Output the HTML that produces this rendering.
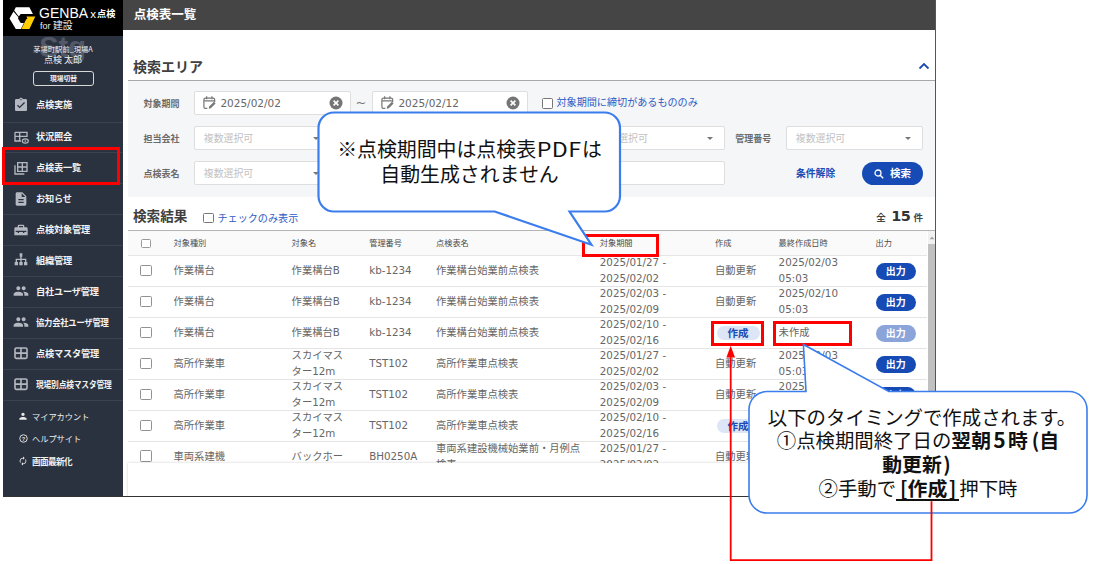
<!DOCTYPE html>
<html lang="ja">
<head>
<meta charset="utf-8">
<title>点検表一覧</title>
<style>
html,body{margin:0;padding:0;}
body{width:1093px;height:564px;position:relative;overflow:hidden;background:#fff;
  font-family:"DejaVu Sans","Noto Sans CJK JP",sans-serif;color:#555;}
.abs{position:absolute;}
#shot{position:absolute;left:0;top:0;width:936px;height:497px;overflow:hidden;background:#fff;}
#frameR{position:absolute;left:935px;top:0;width:1px;height:497px;background:#555;}
#frameB{position:absolute;left:3px;top:496px;width:933px;height:1px;background:#333;}
/* sidebar */
#side{position:absolute;left:3px;top:0;width:120px;height:496px;background:#2b323f;overflow:hidden;}
#logo{position:absolute;left:0;top:0;width:120px;height:36px;background:#000;}
.mi{position:absolute;left:0;width:120px;height:30.94px;border-top:1px solid #3a4250;box-sizing:border-box;}
.mi span{position:absolute;left:33px;top:-1.3px;line-height:30px;font-size:9.2px;font-weight:700;color:#f2f2f2;
  font-family:"Noto Sans CJK JP",sans-serif;white-space:nowrap;letter-spacing:-0.2px;}
.mi svg{position:absolute;left:10.2px;top:6.2px;width:16px;height:16px;}
.sm{position:absolute;left:0;width:120px;height:14px;}
.sm span{position:absolute;left:29px;top:0;line-height:14px;font-size:8.2px;color:#f0f0f0;font-family:"Noto Sans CJK JP",sans-serif;white-space:nowrap;}
.sm svg{position:absolute;left:15.5px;top:3px;width:8px;height:8px;}
/* top bar */
#top{position:absolute;left:123px;top:0;width:813px;height:29.5px;background:#454545;}
#top span{position:absolute;left:10.8px;top:0;line-height:28.6px;font-size:12.5px;font-weight:700;color:#fff;font-family:"Noto Sans CJK JP",sans-serif;}
/* search */
.h2{position:absolute;font-family:"Noto Sans CJK JP",sans-serif;font-weight:700;color:#404040;white-space:nowrap;}
#sarea{position:absolute;left:128px;top:80px;width:808px;height:117px;background:#f5f6f8;border-top:1px solid #a8a8a8;box-sizing:border-box;}
.lbl{position:absolute;font-size:9px;font-weight:700;color:#6a6a6a;font-family:"Noto Sans CJK JP",sans-serif;line-height:23px;white-space:nowrap;}
.inp{position:absolute;height:24px;box-sizing:border-box;border:1px solid #dedede;border-radius:2px;background:#fff;margin-top:-0.3px;}
.inp .ph{position:absolute;left:8.8px;top:0;line-height:22.6px;font-size:9.9px;color:#c2c2c2;font-family:"Noto Sans CJK JP",sans-serif;white-space:nowrap;}
.inp .dt{position:absolute;left:25.4px;top:0;line-height:22.2px;font-size:10.5px;color:#666;white-space:nowrap;}
.inp .arr{position:absolute;right:11px;top:10px;width:0;height:0;border-left:3px solid transparent;border-right:3px solid transparent;border-top:3.5px solid #777;}
.blue{color:#2c5cc5;}
/* table */
#tbl{position:absolute;left:128px;top:230px;width:799px;height:233px;border-top:1px solid transparent;box-sizing:border-box;overflow:hidden;}
#thead{position:absolute;left:0;top:0;width:799px;height:25px;background:#fafafa;border-bottom:1px solid #e6e6e6;box-sizing:border-box;}
.th{position:absolute;top:-1.3px;line-height:24px;font-size:8.2px;color:#4a4a4a;font-family:"Noto Sans CJK JP",sans-serif;white-space:nowrap;}
.tr{position:absolute;left:0;width:799px;height:30.95px;border-bottom:1px solid #e4e4e4;box-sizing:border-box;}
.td{position:absolute;font-size:10.3px;color:#666;white-space:nowrap;line-height:14.5px;}
.td.one{top:7px;}
.td.two{top:-0.6px;line-height:15.4px;}
.cb{position:absolute;left:12.4px;top:8.8px;width:11.6px;height:11.6px;box-sizing:border-box;border:1.6px solid #919191;border-radius:1.5px;background:#fff;}
.out{position:absolute;left:747.5px;top:7.2px;width:40.5px;height:16.6px;border-radius:9px;background:#164ab4;color:#fff;font-size:10px;font-weight:700;text-align:center;line-height:16px;font-family:"Noto Sans CJK JP",sans-serif;}
.out.dis{background:#8ba4da;}
.mk{position:absolute;left:588.5px;top:8.6px;width:43px;height:14px;border-radius:7px;background:#dde6f7;color:#1b4bb3;font-size:10.5px;font-weight:700;text-align:center;line-height:13.5px;font-family:"Noto Sans CJK JP",sans-serif;}
/* annotations */
.red{position:absolute;border:3px solid #ff0000;box-sizing:border-box;}
.co b{font-size:19.85px;font-weight:700;}
.w5{display:inline-block;width:17px;text-align:center;font-size:21px;line-height:1;}
.pl{display:inline-block;width:11.5px;text-align:right;}
.pr{display:inline-block;width:10.5px;text-align:left;margin-left:1.5px;}
.ul{position:relative;display:inline-block;line-height:1;}
.ul::after{content:"";position:absolute;left:0;right:0;bottom:-2.6px;height:1.4px;background:#111;}
.co{font-family:"Noto Sans CJK JP",sans-serif;color:#111;text-align:center;white-space:nowrap;position:absolute;}
</style>
</head>
<body>
<div id="shot">
  <!-- top bar -->
  <div id="top"><span>点検表一覧</span></div>

  <!-- sidebar -->
  <div id="side">
    <div id="logo">
      <svg class="abs" style="left:5px;top:5px" width="30" height="27" viewBox="8 5 30 27">
        <polygon points="15.800,7.300 29.400,7.300 32.900,13.900 20.600,13.900 18.800,16.400 14.200,10.600" fill="#fff"/>
        <polygon points="13.500,11.600 9.500,18.400 15.800,29.100 20.900,29.100 23.900,22.900 20.700,22.900 18,18.400 18.400,17.200" fill="#fff"/>
        <polygon points="26.500,16.600 35.300,16.600 29.400,29.100 21.400,29.100 26.200,19.300 27.400,18.700" fill="#fc0"/>
      </svg>
      <div class="abs" style="left:36px;top:3.600px;font-family:'Liberation Sans',sans-serif;font-size:15.200px;line-height:17px;color:#fff;white-space:nowrap;transform:scaleX(0.925);transform-origin:0 50%;">GENBA</div>
      <div class="abs" style="left:87.300px;top:6px;font-family:'Liberation Sans',sans-serif;font-size:11.500px;line-height:16px;color:#fff;">x</div>
      <div class="abs" style="left:94px;top:4.600px;font-family:'Noto Sans CJK JP',sans-serif;font-weight:700;font-size:9.200px;line-height:16px;color:#fff;white-space:nowrap;">点検</div>
      <div class="abs" style="left:37px;top:20px;font-family:'Liberation Sans',sans-serif;font-size:9px;line-height:11px;color:#eee;white-space:nowrap;">for <span style="font-size:9.800px;font-family:'Noto Sans CJK JP',sans-serif;">建設</span></div>
    </div>
    <div class="abs" style="left:36.200px;top:29.500px;font-family:'Liberation Sans',sans-serif;font-weight:700;font-size:29px;line-height:34px;color:#525868;">Stg</div>
    <div class="abs" style="left:0;top:44px;width:120px;text-align:center;font-size:7.3px;line-height:10px;color:#f0f0f0;font-family:'Noto Sans CJK JP',sans-serif;white-space:nowrap;">茅場町駅前_現場A</div>
    <div class="abs" style="left:0;top:54px;width:120px;text-align:center;font-size:9px;line-height:12px;color:#f0f0f0;font-family:'Noto Sans CJK JP',sans-serif;white-space:nowrap;">点検 太郎</div>
    <div class="abs" style="left:30px;top:71px;width:61px;height:15px;box-sizing:border-box;border:1px solid #d8d8d8;border-radius:3px;text-align:center;font-size:6.8px;font-weight:700;line-height:13px;color:#f0f0f0;font-family:'Noto Sans CJK JP',sans-serif;">現場切替</div>

    <div class="mi" style="top:90.60px;border-top:none">
      <svg viewBox="0 0 24 24"><path fill="#b4b8c0" d="M19 3h-4.18C14.4 1.84 13.3 1 12 1s-2.400.84-2.820 2H5c-1.100 0-2 .9-2 2v14c0 1.100.9 2 2 2h14c1.100 0 2-.9 2-2V5c0-1.100-.9-2-2-2zm-7 0c.55 0 1 .45 1 1s-.45 1-1 1-1-.45-1-1 .45-1 1-1zm-2 14l-4-4 1.410-1.410L10 14.170l6.590-6.590L18 9l-8 8z"/></svg>
      <span>点検実施</span></div>
    <div class="mi" style="top:121.54px">
      <svg viewBox="0 0 24 24"><path fill="none" stroke="#b4b8c0" stroke-width="2" d="M3 5h18v7M3 5v13h9M3 11h18M10 5v13"/><ellipse cx="18.500" cy="18" rx="4.500" ry="3.200" fill="none" stroke="#b4b8c0" stroke-width="1.800"/><circle cx="18.500" cy="18" r="1.300" fill="#b4b8c0"/></svg>
      <span>状況照会</span></div>
    <div class="mi" style="top:152.48px">
      <svg viewBox="0 0 24 24"><path fill="none" stroke="#b4b8c0" stroke-width="2" d="M7 4h14v13H7zM7 10.500h14M14 4v13M3 8v13h14"/></svg>
      <span>点検表一覧</span></div>
    <div class="mi" style="top:183.42px">
      <svg viewBox="0 0 24 24"><path fill="#b4b8c0" d="M14 2H6c-1.100 0-2 .9-2 2v16c0 1.100.9 2 2 2h12c1.100 0 2-.9 2-2V8l-6-6zm2 16H8v-2h8v2zm0-4H8v-2h8v2zm-3-5V3.500L18.500 9H13z"/></svg>
      <span>お知らせ</span></div>
    <div class="mi" style="top:214.36px">
      <svg viewBox="0 0 24 24"><path fill="#b4b8c0" d="M20 8h-3V6c0-1.100-.9-2-2-2H9c-1.100 0-2 .9-2 2v2H4c-1.100 0-2 .9-2 2v10h20V10c0-1.100-.9-2-2-2zM9 6h6v2H9V6zm11 9h-3v1.500h-2V15H9v1.500H7V15H4v-2h16v2z"/></svg>
      <span>点検対象管理</span></div>
    <div class="mi" style="top:245.30px">
      <svg viewBox="0 0 24 24"><path fill="#b4b8c0" d="M10 2h4v5h-1v3h7v5h1.500v5h-5v-5H18v-3h-5v3h1.500v5h-5v-5H11v-3H6v3h1.500v5h-5v-5H4v-5h7V7h-1z"/></svg>
      <span>組織管理</span></div>
    <div class="mi" style="top:276.24px">
      <svg viewBox="0 0 24 24"><path fill="#b4b8c0" d="M16 11c1.660 0 2.990-1.340 2.990-3S17.660 5 16 5c-1.660 0-3 1.340-3 3s1.340 3 3 3zm-8 0c1.660 0 2.990-1.340 2.990-3S9.660 5 8 5C6.340 5 5 6.340 5 8s1.340 3 3 3zm0 2c-2.330 0-7 1.170-7 3.500V19h14v-2.500c0-2.330-4.670-3.500-7-3.500zm8 0c-.29 0-.62.020-.970.050 1.160.84 1.970 1.970 1.970 3.450V19h6v-2.500c0-2.330-4.670-3.500-7-3.500z"/></svg>
      <span>自社ユーザ管理</span></div>
    <div class="mi" style="top:307.18px">
      <svg viewBox="0 0 24 24"><path fill="#b4b8c0" d="M16 11c1.660 0 2.990-1.340 2.990-3S17.660 5 16 5c-1.660 0-3 1.340-3 3s1.340 3 3 3zm-8 0c1.660 0 2.990-1.340 2.990-3S9.660 5 8 5C6.340 5 5 6.340 5 8s1.340 3 3 3zm0 2c-2.330 0-7 1.170-7 3.500V19h14v-2.500c0-2.330-4.670-3.500-7-3.500zm8 0c-.29 0-.62.020-.970.050 1.160.84 1.970 1.970 1.970 3.450V19h6v-2.500c0-2.330-4.670-3.500-7-3.500z"/></svg>
      <span style="transform:scaleX(0.9);transform-origin:0 50%">協力会社ユーザ管理</span></div>
    <div class="mi" style="top:338.12px">
      <svg viewBox="0 0 24 24"><rect x="3" y="4.500" width="18" height="15.500" rx="2" fill="none" stroke="#b4b8c0" stroke-width="2.400"/><path fill="none" stroke="#b4b8c0" stroke-width="2.400" d="M3 12.200h18M12 4.500v15.500"/></svg>
      <span>点検マスタ管理</span></div>
    <div class="mi" style="top:369.06px">
      <svg viewBox="0 0 24 24"><rect x="3" y="4.500" width="18" height="15.500" rx="2" fill="none" stroke="#b4b8c0" stroke-width="2.400"/><path fill="none" stroke="#b4b8c0" stroke-width="2.400" d="M3 12.200h18M12 4.500v15.500"/></svg>
      <span style="transform:scaleX(0.9);transform-origin:0 50%;font-size:8.6px">現場別点検マスタ管理</span></div>
    <div class="mi" style="top:400.00px;height:2px"></div>

    <div class="sm" style="top:409px">
      <svg viewBox="0 0 24 24"><path fill="#e8e8e8" d="M12 12c2.800 0 5-2.200 5-5s-2.200-5-5-5-5 2.200-5 5 2.200 5 5 5zm0 3c-3.700 0-11 1.800-11 5.500V23h22v-2.500c0-3.700-7.300-5.500-11-5.500z"/></svg>
      <span>マイアカウント</span></div>
    <div class="sm" style="top:431.300px">
      <svg viewBox="0 0 24 24" style="left:15.500px;top:2.500px;width:9px;height:9px"><circle cx="12" cy="12" r="10" fill="none" stroke="#e8e8e8" stroke-width="2.500"/><text x="12" y="17.500" font-size="15" font-weight="700" text-anchor="middle" fill="#e8e8e8" font-family="Liberation Sans, sans-serif">?</text></svg>
      <span>ヘルプサイト</span></div>
    <div class="sm" style="top:454px">
      <svg viewBox="0 0 24 24" style="left:15px;top:2px;width:10px;height:10px"><path fill="#e8e8e8" d="M12 6v3l4-4-4-4v3c-4.420 0-8 3.580-8 8 0 1.570.46 3.030 1.240 4.260L6.700 14.800A5.900 5.900 0 016 12c0-3.310 2.690-6 6-6zm6.760 1.740L17.300 9.200c.44.840.7 1.790.7 2.800 0 3.310-2.690 6-6 6v-3l-4 4 4 4v-3c4.420 0 8-3.580 8-8 0-1.570-.46-3.030-1.240-4.260z"/></svg>
      <span style="font-weight:700;letter-spacing:-0.6px;font-size:8.6px">画面最新化</span></div>
  </div>

  <!-- search area -->
  <div class="h2" style="left:133px;top:55.5px;font-size:14px;line-height:20px;">検索エリア</div>
  <svg class="abs" style="left:917.500px;top:62.300px" width="12" height="8" viewBox="0 0 12 8"><path d="M1.500 6.500L6 2l4.500 4.500" fill="none" stroke="#1b4bb3" stroke-width="1.800"/></svg>
  <div id="sarea"></div>

  <div class="lbl" style="left:143.500px;top:91.500px">対象期間</div>
  <div class="inp" style="left:194px;top:91.500px;width:156.500px">
    <svg class="abs" style="left:7.8px;top:3.5px" width="12.8" height="13.3" viewBox="1.3 0.9 11.6 12.1"><path d="M3.500 2.800h7a1.400 1.400 0 011.400 1.400v2.300M5.200 12.200H3.500a1.400 1.400 0 01-1.400-1.400V4.200a1.400 1.400 0 011.400-1.400M4.600 1.200v2.600M9.400 1.200v2.600M2.300 5.300h9.400" fill="none" stroke="#777" stroke-width="1.100"/><path d="M6.500 12.400l.4-1.900 4.300-4.300 1.500 1.500-4.300 4.300z" fill="#777"/></svg>
    <span class="dt">2025/02/02</span>
    <svg class="abs" style="left:133.700px;top:4px" width="14" height="14" viewBox="0 0 14 14"><circle cx="7" cy="7" r="6.500" fill="#757575"/><path d="M4.600 4.600l4.800 4.800M9.400 4.600l-4.800 4.800" stroke="#fff" stroke-width="1.600"/></svg>
  </div>
  <div class="abs" style="left:355.500px;top:90.500px;line-height:24px;font-size:13px;color:#777;">~</div>
  <div class="inp" style="left:372px;top:91.500px;width:156px">
    <svg class="abs" style="left:7.8px;top:3.5px" width="12.8" height="13.3" viewBox="1.3 0.9 11.6 12.1"><path d="M3.500 2.800h7a1.400 1.400 0 011.400 1.400v2.300M5.200 12.200H3.500a1.400 1.400 0 01-1.400-1.400V4.200a1.400 1.400 0 011.400-1.400M4.600 1.200v2.600M9.400 1.200v2.600M2.300 5.300h9.400" fill="none" stroke="#777" stroke-width="1.100"/><path d="M6.500 12.400l.4-1.900 4.300-4.300 1.500 1.500-4.300 4.300z" fill="#777"/></svg>
    <span class="dt">2025/02/12</span>
    <svg class="abs" style="left:133.200px;top:4px" width="14" height="14" viewBox="0 0 14 14"><circle cx="7" cy="7" r="6.500" fill="#757575"/><path d="M4.600 4.600l4.800 4.800M9.400 4.600l-4.800 4.800" stroke="#fff" stroke-width="1.600"/></svg>
  </div>
  <div class="abs" style="left:541.500px;top:97.500px;width:11px;height:11px;box-sizing:border-box;border:1.200px solid #777;border-radius:1.500px;background:#fff;"></div>
  <div class="abs blue" style="left:556.500px;top:91.300px;line-height:22px;font-size:10.100px;font-family:'Noto Sans CJK JP',sans-serif;white-space:nowrap;">対象期間に締切があるもののみ</div>

  <div class="lbl" style="left:143.500px;top:126.500px">担当会社</div>
  <div class="inp" style="left:194px;top:126.500px;width:136.500px"><span class="ph">複数選択可</span><i class="arr"></i></div>
  <div class="lbl" style="left:341px;top:126.500px">対象種別</div>
  <div class="inp" style="left:391.300px;top:126.500px;width:136.500px"><span class="ph">複数選択可</span><i class="arr"></i></div>
  <div class="lbl" style="left:538px;top:126.500px">対象名</div>
  <div class="inp" style="left:588.700px;top:126.500px;width:136.500px"><span class="ph">複数選択可</span><i class="arr"></i></div>
  <div class="lbl" style="left:735.300px;top:126.500px">管理番号</div>
  <div class="inp" style="left:786px;top:126.500px;width:136.500px"><span class="ph">複数選択可</span><i class="arr"></i></div>

  <div class="lbl" style="left:143.500px;top:161.500px">点検表名</div>
  <div class="inp" style="left:194px;top:161.500px;width:136.500px"><span class="ph">複数選択可</span><i class="arr"></i></div>
  <div class="lbl" style="left:538px;top:161.500px">点検者</div>
  <div class="inp" style="left:588.700px;top:161.500px;width:136.500px"></div>
  <div class="abs" style="left:796px;top:162px;line-height:23px;font-size:9.800px;font-weight:700;color:#1b4bb3;font-family:'Noto Sans CJK JP',sans-serif;white-space:nowrap;">条件解除</div>
  <div class="abs" style="left:862px;top:162.300px;width:60.500px;height:22.500px;border-radius:11.500px;background:#164ab4;">
    <svg class="abs" style="left:11.500px;top:6.500px" width="10" height="10" viewBox="0 0 10 10"><circle cx="4" cy="4" r="3" fill="none" stroke="#fff" stroke-width="1.300"/><path d="M6.200 6.200L9.200 9.200" stroke="#fff" stroke-width="1.400"/></svg>
    <span class="abs" style="left:28px;top:0;line-height:22px;font-size:10.500px;font-weight:700;color:#fff;font-family:'Noto Sans CJK JP',sans-serif;white-space:nowrap;">検索</span>
  </div>

  <!-- results -->
  <div class="h2" style="left:133px;top:205.200px;font-size:13.600px;line-height:20px;">検索結果</div>
  <div class="abs" style="left:203px;top:212.500px;width:10.500px;height:10.500px;box-sizing:border-box;border:1.200px solid #777;border-radius:1.500px;background:#fff;"></div>
  <div class="abs blue" style="left:217.500px;top:207px;line-height:22px;font-size:10.100px;font-family:'Noto Sans CJK JP',sans-serif;white-space:nowrap;">チェックのみ表示</div>
  <div class="abs" style="left:876.300px;top:206px;line-height:20px;white-space:nowrap;font-family:'Noto Sans CJK JP',sans-serif;font-size:8.500px;color:#444;font-weight:700;"><span style="font-size:9.500px">全</span><span style="font-family:'DejaVu Sans',sans-serif;font-size:14.500px;color:#333;margin:0 3.500px 0 5.500px;letter-spacing:-0.700px;">15</span><span style="font-size:9.500px">件</span></div>

  <div class="abs" style="left:128px;top:229.700px;width:808px;height:1.300px;background:#b4b4b4;"></div>
  <div id="tbl">
    <div id="thead">
      <div class="abs" style="left:13.300px;top:8px;width:9.400px;height:9.400px;box-sizing:border-box;border:1.400px solid #999;border-radius:1.500px;background:#fff;"></div>
      <div class="th" style="left:45.500px">対象種別</div>
      <div class="th" style="left:163.600px">対象名</div>
      <div class="th" style="left:241.200px">管理番号</div>
      <div class="th" style="left:308px">点検表名</div>
      <div class="th" style="left:471.800px">対象期間</div>
      <div class="th" style="left:587px">作成</div>
      <div class="th" style="left:650.600px">最終作成日時</div>
      <div class="th" style="left:747.500px">出力</div>
    </div>
    <!-- rows inserted below -->
    <div class="tr" style="top:25.00px"><i class="cb"></i>
      <div class="td one" style="left:45.500px">作業構台</div><div class="td one" style="left:163.600px">作業構台B</div><div class="td one" style="left:241.200px">kb-1234</div><div class="td one" style="left:308px">作業構台始業前点検表</div>
      <div class="td two" style="left:471.800px">2025/01/27 -<br>2025/02/02</div><div class="td one" style="left:587px">自動更新</div><div class="td two" style="left:650.600px">2025/02/03<br>05:03</div><div class="out">出力</div></div>
    <div class="tr" style="top:55.95px"><i class="cb"></i>
      <div class="td one" style="left:45.500px">作業構台</div><div class="td one" style="left:163.600px">作業構台B</div><div class="td one" style="left:241.200px">kb-1234</div><div class="td one" style="left:308px">作業構台始業前点検表</div>
      <div class="td two" style="left:471.800px">2025/02/03 -<br>2025/02/09</div><div class="td one" style="left:587px">自動更新</div><div class="td two" style="left:650.600px">2025/02/10<br>05:03</div><div class="out">出力</div></div>
    <div class="tr" style="top:86.90px"><i class="cb"></i>
      <div class="td one" style="left:45.500px">作業構台</div><div class="td one" style="left:163.600px">作業構台B</div><div class="td one" style="left:241.200px">kb-1234</div><div class="td one" style="left:308px">作業構台始業前点検表</div>
      <div class="td two" style="left:471.800px">2025/02/10 -<br>2025/02/16</div><div class="mk">作成</div><div class="td one" style="left:650.600px">未作成</div><div class="out dis">出力</div></div>
    <div class="tr" style="top:117.85px"><i class="cb"></i>
      <div class="td one" style="left:45.500px">高所作業車</div><div class="td two" style="left:163.600px">スカイマス<br>ター12m</div><div class="td one" style="left:241.200px">TST102</div><div class="td one" style="left:308px">高所作業車点検表</div>
      <div class="td two" style="left:471.800px">2025/01/27 -<br>2025/02/02</div><div class="td one" style="left:587px">自動更新</div><div class="td two" style="left:650.600px">2025/02/03<br>05:03</div><div class="out">出力</div></div>
    <div class="tr" style="top:148.80px"><i class="cb"></i>
      <div class="td one" style="left:45.500px">高所作業車</div><div class="td two" style="left:163.600px">スカイマス<br>ター12m</div><div class="td one" style="left:241.200px">TST102</div><div class="td one" style="left:308px">高所作業車点検表</div>
      <div class="td two" style="left:471.800px">2025/02/03 -<br>2025/02/09</div><div class="td one" style="left:587px">自動更新</div><div class="td two" style="left:650.600px">2025/02/10<br>05:03</div><div class="out">出力</div></div>
    <div class="tr" style="top:179.75px"><i class="cb"></i>
      <div class="td one" style="left:45.500px">高所作業車</div><div class="td two" style="left:163.600px">スカイマス<br>ター12m</div><div class="td one" style="left:241.200px">TST102</div><div class="td one" style="left:308px">高所作業車点検表</div>
      <div class="td two" style="left:471.800px">2025/02/10 -<br>2025/02/16</div><div class="mk">作成</div><div class="td one" style="left:650.600px">未作成</div><div class="out dis">出力</div></div>
    <div class="tr" style="top:210.70px"><i class="cb"></i>
      <div class="td one" style="left:45.500px">車両系建機</div><div class="td one" style="left:163.600px">バックホー</div><div class="td one" style="left:241.200px">BH0250A</div><div class="td two" style="left:308px">車両系建設機械始業前・月例点<br>検表</div>
      <div class="td two" style="left:471.800px">2025/01/27 -<br>2025/02/02</div><div class="td one" style="left:587px">自動更新</div><div class="td two" style="left:650.600px">2025/02/03<br>05:03</div><div class="out">出力</div></div>
  </div>
  <!-- scrollbar -->
  <div class="abs" style="left:927.500px;top:231px;width:8px;height:232px;background:#f1f1f1;"></div>
  <div class="abs" style="left:928px;top:244px;width:7px;height:219px;background:#c1c1c1;"></div>
  <svg class="abs" style="left:928.500px;top:235px" width="6" height="5" viewBox="0 0 6 5"><path d="M0.500 4.200L3 1.500l2.500 2.700z" fill="#a5a5a5"/></svg>
  <!-- bottom panel -->
  <div class="abs" style="left:128px;top:463.200px;width:808px;height:34px;background:#fff;box-shadow:0 0 3px rgba(0,0,0,0.18);"></div>
</div>
<div id="frameR"></div>
<div id="frameB"></div>

<!-- annotations -->
<div class="red" style="left:2px;top:147.300px;width:118px;height:38.200px;"></div>
<div class="red" style="left:581.500px;top:234px;width:77.500px;height:22.500px;"></div>
<div class="red" style="left:711.400px;top:321.400px;width:52.300px;height:24.500px;"></div>
<div class="red" style="left:772.500px;top:321.400px;width:79px;height:24.500px;"></div>

<svg class="abs" style="left:0;top:0" width="1093" height="564" viewBox="0 0 1093 564">
  <!-- callout 1 -->
  <path d="M334 112.500H604.500A15.500 15.500 0 01620 128V196A15.500 15.500 0 01604.500 211.500H569.500L591.400 244.700L494.700 211.500H334A15.500 15.500 0 01318.500 196V128A15.500 15.500 0 01334 112.500Z" fill="#fff" stroke="#3b7ded" stroke-width="2.200"/>
  <!-- callout 2 -->
  <path d="M767 391.500H806L803.400 344.500L888.800 391.500H1069A18 18 0 011087 409.500V495A18 18 0 011069 513H767A18 18 0 01749 495V409.500A18 18 0 01767 391.500Z" fill="#fff" stroke="#3b7ded" stroke-width="1.600"/>
  <!-- red connector -->
  <path d="M931.500 501.200V560.200H730.700V356" fill="none" stroke="#ff0000" stroke-width="1.800"/>
  <path d="M730.700 345.800L726.400 357.500H735Z" fill="#ff0000"/>
</svg>
<div class="co" style="left:318px;top:137.400px;width:303px;font-size:19.900px;line-height:24.300px;">※点検期間中は点検表<span style="display:inline-block;transform:scaleX(1.170);margin:0 3.600px 0 4.200px;letter-spacing:0.300px">PDF</span>は<br>自動生成されません</div>
<div class="co" style="left:749px;top:404.500px;width:338px;font-size:19.400px;line-height:23.900px;"><span style="margin-left:8px">以下のタイミングで作成されます。</span><br>①点検期間終了日の<b>翌朝<span class="w5">5</span>時<span class="pl">(</span>自</b><br><b>動更新<span class="pr">)</span></b><br>②手動で<b class="ul"><span class="pl">[</span>作成<span class="pr">]</span></b>押下時</div>
</body>
</html>
